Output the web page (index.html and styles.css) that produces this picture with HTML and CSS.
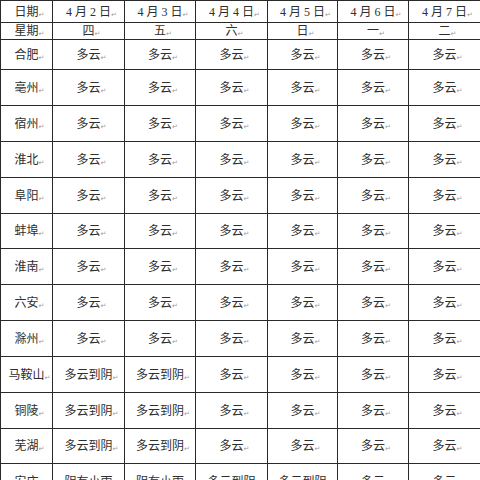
FILE: index.html
```html
<!DOCTYPE html>
<html lang="zh">
<head>
<meta charset="utf-8">
<title>天气预报</title>
<link rel="stylesheet" href="styles.css">
</head>
<body>
<table class="grid">
  <colgroup>
    <col class="c1"><col class="c2"><col class="c3"><col class="c4"><col class="c5"><col class="c6"><col class="c7">
  </colgroup>
  <tbody>
    <tr class="r-date">
      <td><span class="t">日期</span></td>
      <td><span class="t">4 月 2 日</span></td>
      <td><span class="t">4 月 3 日</span></td>
      <td><span class="t">4 月 4 日</span></td>
      <td><span class="t">4 月 5 日</span></td>
      <td><span class="t">4 月 6 日</span></td>
      <td><span class="t">4 月 7 日</span></td>
    </tr>
    <tr class="r-week">
      <td><span class="t">星期</span></td>
      <td><span class="t">四</span></td>
      <td><span class="t">五</span></td>
      <td><span class="t">六</span></td>
      <td><span class="t">日</span></td>
      <td><span class="t">一</span></td>
      <td><span class="t">二</span></td>
    </tr>
    <tr class="r-first">
      <td><span class="t">合肥</span></td>
      <td><span class="t">多云</span></td><td><span class="t">多云</span></td><td><span class="t">多云</span></td><td><span class="t">多云</span></td><td><span class="t">多云</span></td><td><span class="t">多云</span></td>
    </tr>
    <tr class="r-city">
      <td><span class="t">亳州</span></td>
      <td><span class="t">多云</span></td><td><span class="t">多云</span></td><td><span class="t">多云</span></td><td><span class="t">多云</span></td><td><span class="t">多云</span></td><td><span class="t">多云</span></td>
    </tr>
    <tr class="r-city">
      <td><span class="t">宿州</span></td>
      <td><span class="t">多云</span></td><td><span class="t">多云</span></td><td><span class="t">多云</span></td><td><span class="t">多云</span></td><td><span class="t">多云</span></td><td><span class="t">多云</span></td>
    </tr>
    <tr class="r-city">
      <td><span class="t">淮北</span></td>
      <td><span class="t">多云</span></td><td><span class="t">多云</span></td><td><span class="t">多云</span></td><td><span class="t">多云</span></td><td><span class="t">多云</span></td><td><span class="t">多云</span></td>
    </tr>
    <tr class="r-city">
      <td><span class="t">阜阳</span></td>
      <td><span class="t">多云</span></td><td><span class="t">多云</span></td><td><span class="t">多云</span></td><td><span class="t">多云</span></td><td><span class="t">多云</span></td><td><span class="t">多云</span></td>
    </tr>
    <tr class="r-short">
      <td><span class="t">蚌埠</span></td>
      <td><span class="t">多云</span></td><td><span class="t">多云</span></td><td><span class="t">多云</span></td><td><span class="t">多云</span></td><td><span class="t">多云</span></td><td><span class="t">多云</span></td>
    </tr>
    <tr class="r-city">
      <td><span class="t">淮南</span></td>
      <td><span class="t">多云</span></td><td><span class="t">多云</span></td><td><span class="t">多云</span></td><td><span class="t">多云</span></td><td><span class="t">多云</span></td><td><span class="t">多云</span></td>
    </tr>
    <tr class="r-city">
      <td><span class="t">六安</span></td>
      <td><span class="t">多云</span></td><td><span class="t">多云</span></td><td><span class="t">多云</span></td><td><span class="t">多云</span></td><td><span class="t">多云</span></td><td><span class="t">多云</span></td>
    </tr>
    <tr class="r-city">
      <td><span class="t">滁州</span></td>
      <td><span class="t">多云</span></td><td><span class="t">多云</span></td><td><span class="t">多云</span></td><td><span class="t">多云</span></td><td><span class="t">多云</span></td><td><span class="t">多云</span></td>
    </tr>
    <tr class="r-city">
      <td><span class="t">马鞍山</span></td>
      <td><span class="t">多云到阴</span></td><td><span class="t">多云到阴</span></td><td><span class="t">多云</span></td><td><span class="t">多云</span></td><td><span class="t">多云</span></td><td><span class="t">多云</span></td>
    </tr>
    <tr class="r-city">
      <td><span class="t">铜陵</span></td>
      <td><span class="t">多云到阴</span></td><td><span class="t">多云到阴</span></td><td><span class="t">多云</span></td><td><span class="t">多云</span></td><td><span class="t">多云</span></td><td><span class="t">多云</span></td>
    </tr>
    <tr class="r-short">
      <td><span class="t">芜湖</span></td>
      <td><span class="t">多云到阴</span></td><td><span class="t">多云到阴</span></td><td><span class="t">多云</span></td><td><span class="t">多云</span></td><td><span class="t">多云</span></td><td><span class="t">多云</span></td>
    </tr>
    <tr class="r-city">
      <td><span class="t">安庆</span></td>
      <td><span class="t">阴有小雨</span></td><td><span class="t">阴有小雨</span></td><td><span class="t">多云到阴</span></td><td><span class="t">多云到阴</span></td><td><span class="t">多云</span></td><td><span class="t">多云</span></td>
    </tr>
  </tbody>
</table>
</body>
</html>
```

FILE: styles.css
```css
html, body {
  margin: 0;
  padding: 0;
  background: #ffffff;
}

body {
  overflow: hidden;
  height: 480px;
}

.grid {
  border-collapse: collapse;
  table-layout: fixed;
  width: 480px;
  font-family: "Liberation Serif", "Noto Sans CJK SC", sans-serif;
  font-size: 12px;
  color: #2e2e2e;
}

.c1 { width: 52px; }
.c2 { width: 72px; }
.c3 { width: 71px; }
.c4 { width: 72px; }
.c5 { width: 70px; }
.c6 { width: 71px; }
.c7 { width: 72px; }

.grid td {
  border: 1px solid #2a2a2a;
  padding: 0;
  text-align: center;
  vertical-align: middle;
  line-height: 14px;
  white-space: nowrap;
  overflow: hidden;
}

.r-date td { height: 21px; }
.r-week td { height: 16px; }
.r-first td { height: 29px; }
.r-city td { height: 35px; }
.r-short td { height: 34px; }

.t::after {
  content: "\21B5";
  display: inline-block;
  width: 7px;
  margin-right: -7px;
  font-family: "DejaVu Sans", sans-serif;
  font-size: 7px;
  line-height: 7px;
  color: #9a9a9a;
  text-align: left;
  vertical-align: -1px;
}
```
